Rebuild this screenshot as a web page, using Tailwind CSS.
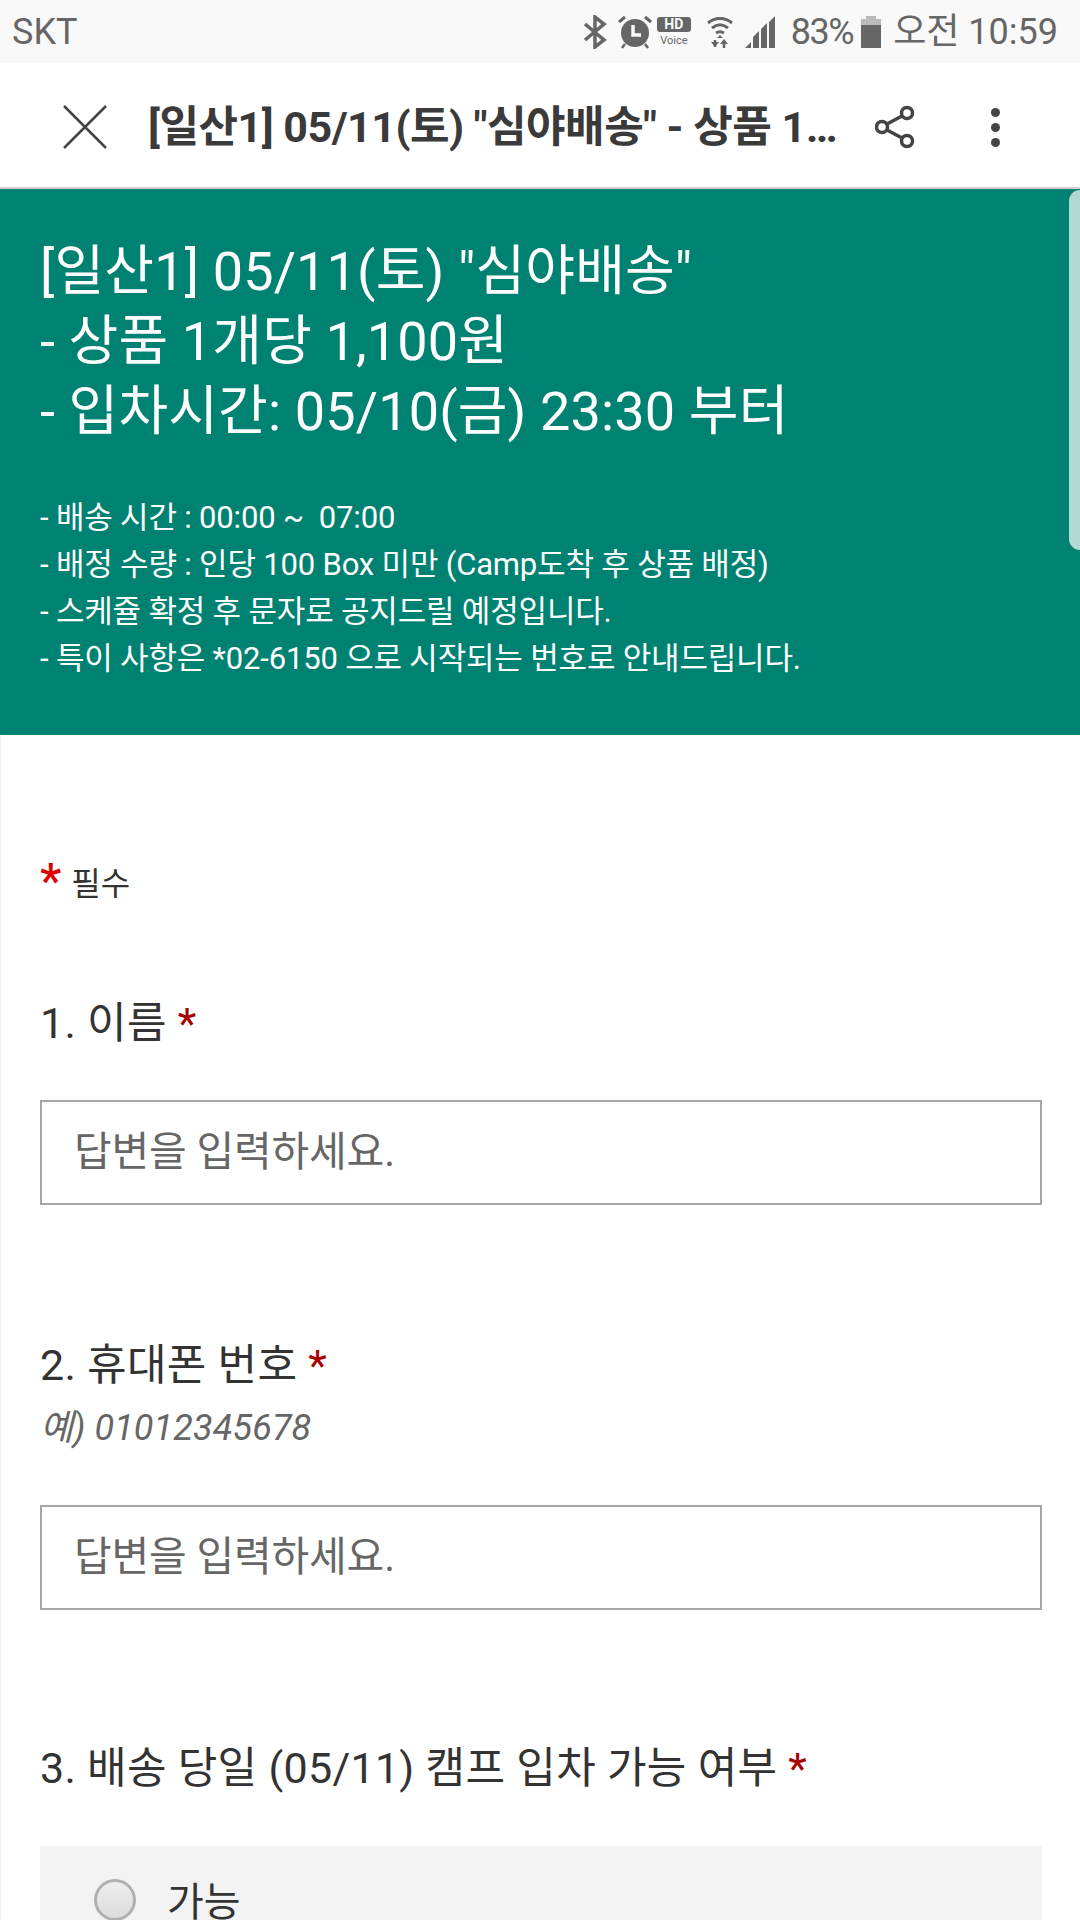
<!DOCTYPE html>
<html lang="ko">
<head>
  <meta charset="UTF-8" />
  <title>심야배송</title>
  <script src="https://cdn.jsdelivr.net/npm/@tailwindcss/browser@4"></script>
</head>
<body class="w-[1080px] h-[1920px] overflow-hidden bg-white font-['Roboto','Noto_Sans_CJK_KR',sans-serif] text-[#333333]">

  <!-- status bar -->
  <div class="h-[63px] bg-[#f9f9f9] flex items-center pl-[12px] pr-[22px] text-[#666666] text-[36px] leading-none">
    <span>SKT</span>
    <div class="ml-auto flex items-center">
      <svg class="w-[24px] h-[34px]" viewBox="0 0 24 34" fill="none" stroke="#666666" stroke-width="3.5"><path d="M2 9l19 16-9 7V2l9 7L2 25"/></svg>
      <svg class="w-[34px] h-[34px] ml-[11px]" viewBox="0 0 34 34"><circle cx="17" cy="18" r="14" fill="#666666"/><path d="M1 7l6-5M33 7l-6-5" stroke="#666666" stroke-width="3"/><path d="M15 10v10h8" fill="none" stroke="#f9f9f9" stroke-width="3.5"/><path d="M7 29l-3 4M27 29l3 4" stroke="#666666" stroke-width="2.5"/></svg>
      <div class="w-[34px] ml-[5px] flex flex-col items-center">
        <span class="w-[34px] h-[15px] rounded-[3px] bg-[#666666] text-[#f9f9f9] text-[14px] leading-[15px] text-center font-bold">HD</span>
        <span class="text-[11px] leading-[13px] mt-[2px]">Voice</span>
      </div>
      <svg class="w-[28px] h-[34px] ml-[15px]" viewBox="0 0 28 34" fill="none" stroke="#666666" stroke-width="3"><path d="M2 8c7-6 17-6 24 0M6 13c5-4 11-4 16 0M10 18c3-2 5-2 8 0"/><path d="M14 20l-3 3h6z" fill="#666666" stroke="none"/><path d="M9 25v7M18 33v-7" stroke-width="2.5"/><path d="M5 27l4 5 4-5zM14 29l4-5 4 5z" fill="#666666" stroke="none"/></svg>
      <svg class="w-[30px] h-[32px] ml-[11px]" viewBox="0 0 30 32" fill="#666666"><path d="M0 32l6-6v6zM8 32V21l6-6v17zM16 32V13l6-6v25zM24 32V6l6-6v32z"/></svg>
      <span class="ml-[16px] tracking-[-1.5px]">83%</span>
      <svg class="w-[20px] h-[32px] ml-[8px]" viewBox="0 0 20 32"><path d="M5 0h10v3H5z" fill="#bbbbbb"/><path d="M0 3h20v6H0z" fill="#bbbbbb"/><path d="M0 9h20v23H0z" fill="#666666"/></svg>
      <span class="ml-[12px]">오전 10:59</span>
    </div>
  </div>

  <!-- title bar -->
  <div class="h-[126px] pt-[4px] bg-white border-b-2 border-[#cfcfcf] flex items-center">
    <svg class="w-[44px] h-[44px] ml-[63px]" viewBox="0 0 44 44" fill="none" stroke="#444444" stroke-width="2.5"><path d="M1 1l42 42M43 1L1 43"/></svg>
    <div class="ml-[41px] w-[690px] whitespace-nowrap text-[43px] font-bold leading-[50px] tracking-[-0.5px] text-[#3a3a3a]">[일산1] 05/11(토) "심야배송" - 상품 1…</div>
    <svg class="w-[40px] h-[44px] ml-[37px]" viewBox="0 0 40 44" fill="none" stroke="#444444" stroke-width="3.5"><circle cx="32" cy="8" r="5.5"/><circle cx="7" cy="22" r="5.5"/><circle cx="32" cy="36" r="5.5"/><path d="M12 19l15-8M12 25l15 8"/></svg>
    <div class="ml-[76px] flex flex-col gap-[6px]">
      <span class="w-[9px] h-[9px] rounded-full bg-[#444444]"></span>
      <span class="w-[9px] h-[9px] rounded-full bg-[#444444]"></span>
      <span class="w-[9px] h-[9px] rounded-full bg-[#444444]"></span>
    </div>
  </div>

  <!-- banner -->
  <div class="relative h-[546px] bg-[#008272] text-white px-[40px] pt-[48px]">
    <h1 class="text-[54px] leading-[70px] font-normal tracking-[0.15px]">[일산1] 05/11(토) "심야배송"<br>- 상품 1개당 1,100원<br>- 입차시간: 05/10(금) 23:30 부터</h1>
    <p class="mt-[47px] text-[31px] leading-[47px] tracking-[-0.18px] whitespace-pre">- 배송 시간 : 00:00 ~  07:00
- 배정 수량 : 인당 100 Box 미만 (Camp도착 후 상품 배정)
- 스케쥴 확정 후 문자로 공지드릴 예정입니다.
- 특이 사항은 *02-6150 으로 시작되는 번호로 안내드립니다.</p>
    <div class="absolute right-0 top-[1px] w-[11px] h-[360px] bg-[#b3d9d4] rounded-l-[12px]"></div>
  </div>

  <!-- form -->
  <div class="pl-[39px] pr-[40px] pt-[122px] border-l border-[#f0f0f0] h-[1185px]">
    <div class="flex items-center h-[44px]">
      <span class="text-[48px] leading-none text-[#e00000] font-medium mt-[3px]">*</span>
      <span class="ml-[10px] text-[32px] leading-none mt-[10px]">필수</span>
    </div>

    <div class="mt-[94px] text-[43px] leading-[56px] tracking-[0.3px]">1. 이름 <span class="text-[#a80000]">*</span></div>
    <div class="mt-[49px] h-[105px] w-[1002px] border-2 border-[#a6a6a6] flex items-center px-[32px] text-[41px] tracking-[-0.2px] text-[#666666]">답변을 입력하세요.</div>

    <div class="mt-[132px] text-[43px] leading-[56px] tracking-[0.3px]">2. 휴대폰 번호 <span class="text-[#a80000]">*</span></div>
    <div class="mt-[12px] text-[36px] leading-[46px] tracking-[0.1px] italic text-[#666666]">예) 01012345678</div>
    <div class="mt-[54px] h-[105px] w-[1002px] border-2 border-[#a6a6a6] flex items-center px-[32px] text-[41px] tracking-[-0.2px] text-[#666666]">답변을 입력하세요.</div>

    <div class="mt-[130px] text-[43px] leading-[56px] tracking-[0.3px]">3. 배송 당일 (05/11) 캠프 입차 가능 여부 <span class="text-[#a80000]">*</span></div>
    <div class="mt-[50px] h-[120px] w-[1002px] bg-[#f3f3f3] flex items-start pl-[54px] pt-[33px]">
      <span class="w-[42px] h-[42px] rounded-full border-[3px] border-[#b0b0b0] bg-gradient-to-b from-[#eeeeee] to-[#dcdcdc]"></span>
      <span class="ml-[31px] text-[40px] leading-[48px]">가능</span>
    </div>
  </div>

</body>
</html>
